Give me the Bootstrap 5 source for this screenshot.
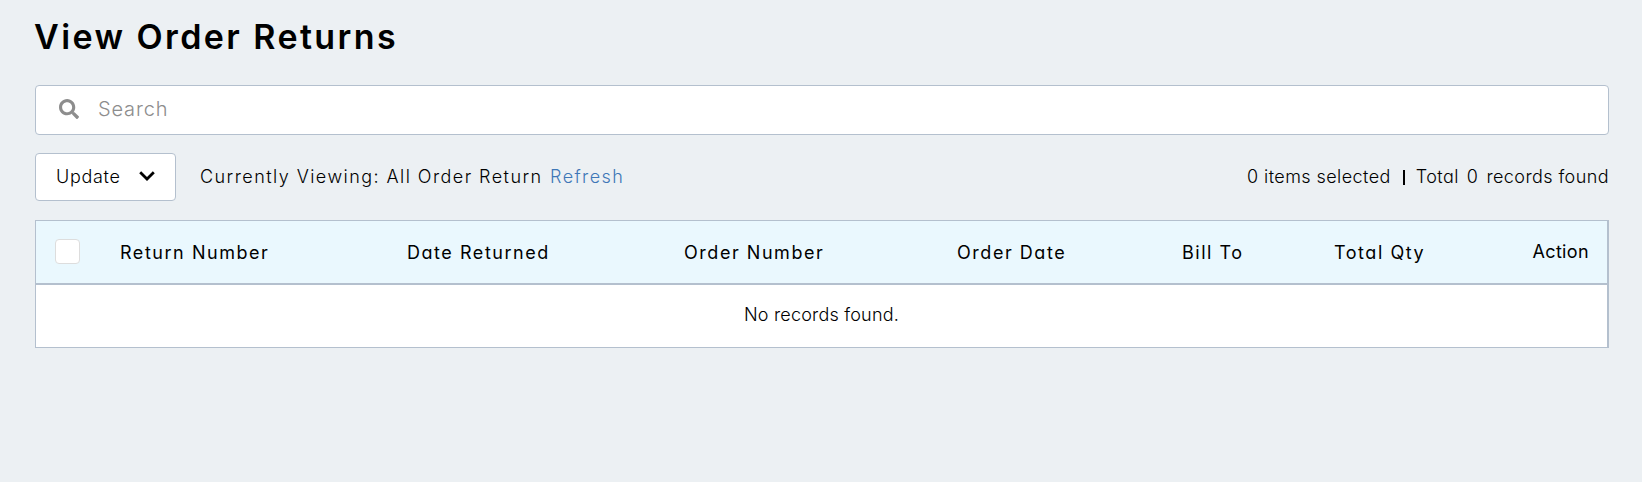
<!DOCTYPE html>
<html lang="en">
<head>
<meta charset="utf-8">
<title>View Order Returns</title>
<meta name="viewport" content="width=device-width, initial-scale=1">
<link href="https://cdn.jsdelivr.net/npm/bootstrap@5.3.0/dist/css/bootstrap.min.css" rel="stylesheet">
<style>
body{font-family:Inter,sans-serif;font-feature-settings:"cv11";font-size:18px;font-weight:300;line-height:24px;color:#000;background:#ecf0f3}
.page{padding:10px 33px 0 35px}
.page-title{font-size:34px;line-height:54px;font-weight:600;letter-spacing:2.42px;margin:0 0 21px -1px}
.search-box{height:50px;background:#fff;border:1px solid #b4c0ce;border-radius:4px;padding:0 23px}
.search-box svg{margin-top:-3px}
.search-box .form-control{font-size:20px;font-weight:300;letter-spacing:.85px;color:#000;line-height:24px;margin:-2px 0 0 19px}
.search-box .form-control::placeholder{color:#8d8d8d;opacity:1}
.search-box .form-control:focus{box-shadow:none}
.toolbar{margin:18px 0 19px}
.btn-update{height:48px;width:141px;background:#fff;border:1px solid #b4c0ce;border-radius:4px;padding:0 20px 2px;font-size:18px;font-weight:300;letter-spacing:.7px;color:#000}
.viewing{letter-spacing:1.44px;margin-left:24px}
.viewing a{color:#3f77b7;letter-spacing:1.4px;margin-left:1px}
.counts{letter-spacing:.42px}
.divider{width:2px;height:15px;background:#000;margin:0 11px 0 12px}
.returns{table-layout:fixed;border:1px solid #b4c0ce;border-right-width:2px;--bs-table-bg:#fff;border-collapse:separate;border-spacing:0}
.returns>thead th{--bs-table-bg:#eaf8fe;height:64px;padding:2px 0 0;font-weight:400;letter-spacing:1.54px;border-bottom:2px solid #b4c0ce;white-space:nowrap;color:#000;vertical-align:middle}
.returns>thead th.plain{letter-spacing:.36px;padding:0 18px 1px 0}
.returns>tbody td{height:62px;padding:0 0 2px;letter-spacing:.2px;border:0;color:#000}
.returns .form-check-input{display:block;width:25px;height:25px;border:1px solid #ddd;border-radius:4px;margin:0 0 0 19px;background-color:#fff;float:none}
.w-check{width:84px}.w-number{width:287px}.w-returned{width:277px}.w-order{width:273px}.w-date{width:225px}.w-bill{width:152px}
</style>
</head>
<body>
<main class="page">
  <h1 class="page-title">View Order Returns</h1>

  <div class="search-box d-flex align-items-center">
    <svg width="20" height="20" viewBox="0 0 512 512" fill="#8d8d8d" class="flex-shrink-0" aria-hidden="true"><path d="M505 442.700L405.300 343c-4.500-4.500-10.600-7-17-7H372c27.600-35.300 44-79.700 44-128C416 93.100 322.900 0 208 0S0 93.100 0 208s93.100 208 208 208c48.300 0 92.700-16.400 128-44v16.300c0 6.400 2.500 12.500 7 17l99.700 99.700c9.400 9.400 24.600 9.400 33.900 0l28.300-28.300c9.400-9.400 9.400-24.600.1-34zM208 336c-70.700 0-128-57.200-128-128 0-70.700 57.200-128 128-128 70.700 0 128 57.200 128 128 0 70.700-57.200 128-128 128z"/></svg>
    <input type="text" class="form-control border-0 bg-transparent p-0" placeholder="Search" aria-label="Search">
  </div>

  <div class="toolbar d-flex align-items-center justify-content-between">
    <div class="d-flex align-items-center">
      <button type="button" class="btn btn-update d-flex align-items-center">Update
        <svg class="ms-auto" width="16" height="10" viewBox="0 0 16 10" fill="none" stroke="#000" stroke-width="2.800" aria-hidden="true"><path d="M1.200 1.300L8 8l6.800-6.700"/></svg>
      </button>
      <span class="viewing">Currently Viewing: All Order Return <a href="#" class="text-decoration-none">Refresh</a></span>
    </div>
    <div class="counts d-flex align-items-center">
      <span>0 items selected</span><span class="divider"></span><span>Total</span><span class="mx-2">0</span><span>records found</span>
    </div>
  </div>

  <table class="table returns mb-0">
    <colgroup><col class="w-check"><col class="w-number"><col class="w-returned"><col class="w-order"><col class="w-date"><col class="w-bill"><col><col></colgroup>
    <thead>
      <tr>
        <th class="plain"><input class="form-check-input" type="checkbox" aria-label="Select all"></th>
        <th>Return Number</th><th>Date Returned</th><th>Order Number</th><th>Order Date</th><th>Bill To</th><th>Total Qty</th><th class="plain text-end">Action</th>
      </tr>
    </thead>
    <tbody><tr><td colspan="8" class="text-center align-middle">No records found.</td></tr></tbody>
  </table>
</main>
<script src="https://cdn.jsdelivr.net/npm/bootstrap@5.3.0/dist/js/bootstrap.bundle.min.js"></script>
</body>
</html>
